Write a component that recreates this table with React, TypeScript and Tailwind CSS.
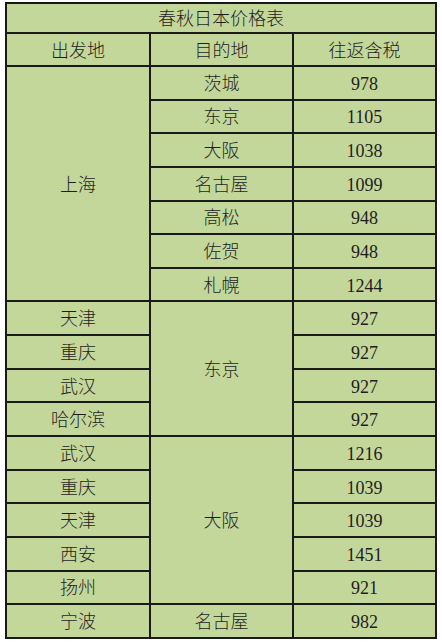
import React from "react";

const base =
  "bg-[#c4d79b] flex items-center justify-center pt-[2px] text-[18px] text-[#1e1e1e] leading-none font-light";

type Cell = { t: string; cls: string };

const cells: Cell[] = [
  { t: "春秋日本价格表", cls: "col-span-3" },
  { t: "出发地", cls: "" },
  { t: "目的地", cls: "" },
  { t: "往返含税", cls: "" },
  { t: "上海", cls: "col-start-1 row-start-3 row-span-7" },
  { t: "茨城", cls: "col-start-2 row-start-3" },
  { t: "978", cls: "col-start-3 row-start-3" },
  { t: "东京", cls: "col-start-2 row-start-4" },
  { t: "1105", cls: "col-start-3 row-start-4" },
  { t: "大阪", cls: "col-start-2 row-start-5" },
  { t: "1038", cls: "col-start-3 row-start-5" },
  { t: "名古屋", cls: "col-start-2 row-start-6" },
  { t: "1099", cls: "col-start-3 row-start-6" },
  { t: "高松", cls: "col-start-2 row-start-7" },
  { t: "948", cls: "col-start-3 row-start-7" },
  { t: "佐贺", cls: "col-start-2 row-start-8" },
  { t: "948", cls: "col-start-3 row-start-8" },
  { t: "札幌", cls: "col-start-2 row-start-9" },
  { t: "1244", cls: "col-start-3 row-start-9" },
  { t: "东京", cls: "col-start-2 row-start-10 row-span-4" },
  { t: "天津", cls: "col-start-1 row-start-10" },
  { t: "927", cls: "col-start-3 row-start-10" },
  { t: "重庆", cls: "col-start-1 row-start-11" },
  { t: "927", cls: "col-start-3 row-start-11" },
  { t: "武汉", cls: "col-start-1 row-start-12" },
  { t: "927", cls: "col-start-3 row-start-12" },
  { t: "哈尔滨", cls: "col-start-1 row-start-13" },
  { t: "927", cls: "col-start-3 row-start-13" },
  { t: "大阪", cls: "col-start-2 row-start-14 row-span-5" },
  { t: "武汉", cls: "col-start-1 row-start-14" },
  { t: "1216", cls: "col-start-3 row-start-14" },
  { t: "重庆", cls: "col-start-1 row-start-15" },
  { t: "1039", cls: "col-start-3 row-start-15" },
  { t: "天津", cls: "col-start-1 row-start-16" },
  { t: "1039", cls: "col-start-3 row-start-16" },
  { t: "西安", cls: "col-start-1 row-start-17" },
  { t: "1451", cls: "col-start-3 row-start-17" },
  { t: "扬州", cls: "col-start-1 row-start-18" },
  { t: "921", cls: "col-start-3 row-start-18" },
  { t: "宁波", cls: "col-start-1 row-start-19" },
  { t: "名古屋", cls: "col-start-2 row-start-19" },
  { t: "982", cls: "col-start-3 row-start-19" },
];

export default function App() {
  return (
    <div className="w-[442px] h-[642px] bg-white pt-[2px] pl-[5px]">
      <div className="w-[432px] grid grid-cols-[142px_141px_141px] grid-rows-[28px_31px_repeat(17,31.65px)] gap-[2px] p-[2px] bg-[#1a1a1a] font-['Liberation_Serif','Noto_Sans_CJK_SC',serif]">
        {cells.map((c, i) => (
          <div key={i} className={base + " " + c.cls}>
            {c.t}
          </div>
        ))}
      </div>
    </div>
  );
}
